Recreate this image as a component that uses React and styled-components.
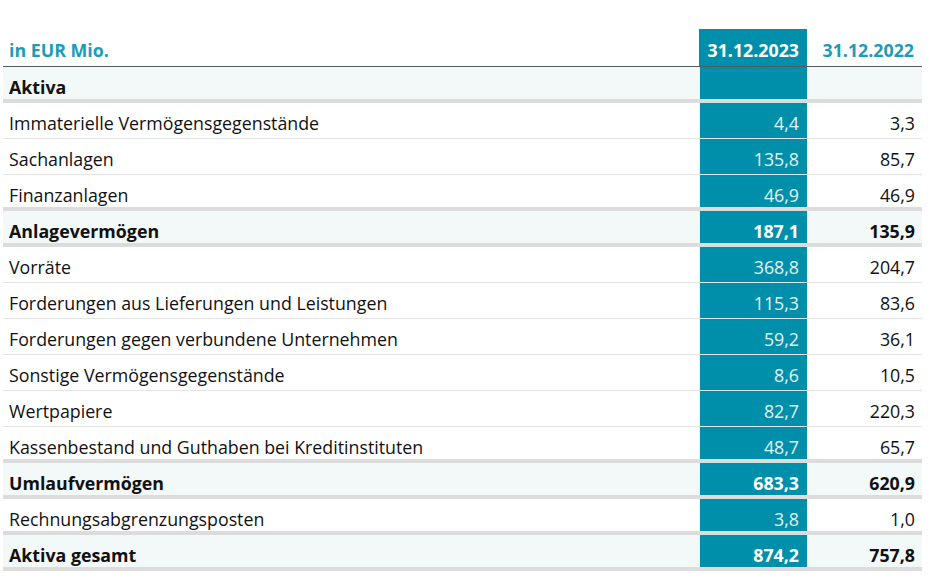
import React from 'react';
import styled, { createGlobalStyle } from 'styled-components';

const GlobalStyle = createGlobalStyle`
  html, body {
    margin: 0;
    padding: 0;
    background: #ffffff;
  }
  body {
    font-family: "Open Sans", "Liberation Sans", sans-serif;
  }
`;

const TEAL = '#008fab';

// Bilanzdaten (Aktiva)
const rows = [
  { label: 'Aktiva', a: '', b: '', kind: 'section' },
  { label: 'Immaterielle Vermögensgegenstände', a: '4,4', b: '3,3' },
  { label: 'Sachanlagen', a: '135,8', b: '85,7' },
  { label: 'Finanzanlagen', a: '46,9', b: '46,9', beforeSum: true },
  { label: 'Anlagevermögen', a: '187,1', b: '135,9', kind: 'sum' },
  { label: 'Vorräte', a: '368,8', b: '204,7' },
  { label: 'Forderungen aus Lieferungen und Leistungen', a: '115,3', b: '83,6' },
  { label: 'Forderungen gegen verbundene Unternehmen', a: '59,2', b: '36,1' },
  { label: 'Sonstige Vermögensgegenstände', a: '8,6', b: '10,5' },
  { label: 'Wertpapiere', a: '82,7', b: '220,3' },
  { label: 'Kassenbestand und Guthaben bei Kreditinstituten', a: '48,7', b: '65,7', beforeSum: true },
  { label: 'Umlaufvermögen', a: '683,3', b: '620,9', kind: 'sum' },
  { label: 'Rechnungsabgrenzungsposten', a: '3,8', b: '1,0', beforeSum: true },
  { label: 'Aktiva gesamt', a: '874,2', b: '757,8', kind: 'sum' },
];

const Table = styled.div`
  width: 919px;
  margin: 0 0 0 3px;
  padding-top: 29px;
`;

const HeadRow = styled.div`
  display: grid;
  grid-template-columns: 1fr 108px 115px;
  height: 38px;
  box-sizing: border-box;
  border-bottom: 1px solid #555a5c;
`;

const HeadCell = styled.div`
  display: flex;
  align-items: center;
  justify-content: ${p => (p.$left ? 'flex-start' : 'flex-end')};
  padding: 5px ${p => (p.$left ? '0' : '8px')} 0 ${p => (p.$left ? '6px' : '0')};
  font-size: 17.8px;
  font-weight: 700;
  color: ${p => (p.$current ? '#ffffff' : '#1a9cb9')};
  background: ${p => (p.$current ? TEAL : 'transparent')};
  box-sizing: border-box;
`;

const Row = styled.div`
  display: grid;
  grid-template-columns: 1fr 108px 115px;
  height: 36px;
  box-sizing: border-box;
  background: ${p => (p.$bold ? '#f3f8f8' : '#ffffff')};
  border-bottom: ${p => (p.$thick ? '4px solid #dcdcdc' : '1px solid #e4e4e4')};
`;

const Label = styled.div`
  display: flex;
  align-items: center;
  padding: ${p => (p.$thick ? '7px' : '4px')} 0 0 6px;
  font-size: 17.8px;
  font-weight: ${p => (p.$bold ? 700 : 400)};
  color: #111;
  white-space: nowrap;
`;

const Value = styled.div`
  display: flex;
  align-items: center;
  justify-content: flex-end;
  padding: ${p => (p.$thick ? '7px' : '4px')} ${p => (p.$current ? '8px' : '7px')} 0 0;
  font-size: 17.8px;
  font-weight: ${p => (p.$bold ? 700 : 400)};
  color: ${p => (p.$current ? (p.$bold ? '#ffffff' : '#e4f3f6') : '#111')};
  background: ${p => (p.$current ? TEAL : 'transparent')};
  border-left: ${p => (p.$current ? '1px solid #e6f2f4' : 'none')};
  box-sizing: border-box;
`;

export default function App() {
  return (
    <>
      <GlobalStyle />
      <Table>
        <HeadRow>
          <HeadCell $left>in EUR Mio.</HeadCell>
          <HeadCell $current>31.12.2023</HeadCell>
          <HeadCell>31.12.2022</HeadCell>
        </HeadRow>
        {rows.map(r => {
          const bold = r.kind === 'section' || r.kind === 'sum';
          const thick = bold || r.beforeSum;
          return (
            <Row key={r.label} $bold={bold} $thick={thick}>
              <Label $bold={bold} $thick={thick}>{r.label}</Label>
              <Value $current $bold={bold} $thick={thick}>{r.a}</Value>
              <Value $bold={bold} $thick={thick}>{r.b}</Value>
            </Row>
          );
        })}
      </Table>
    </>
  );
}
